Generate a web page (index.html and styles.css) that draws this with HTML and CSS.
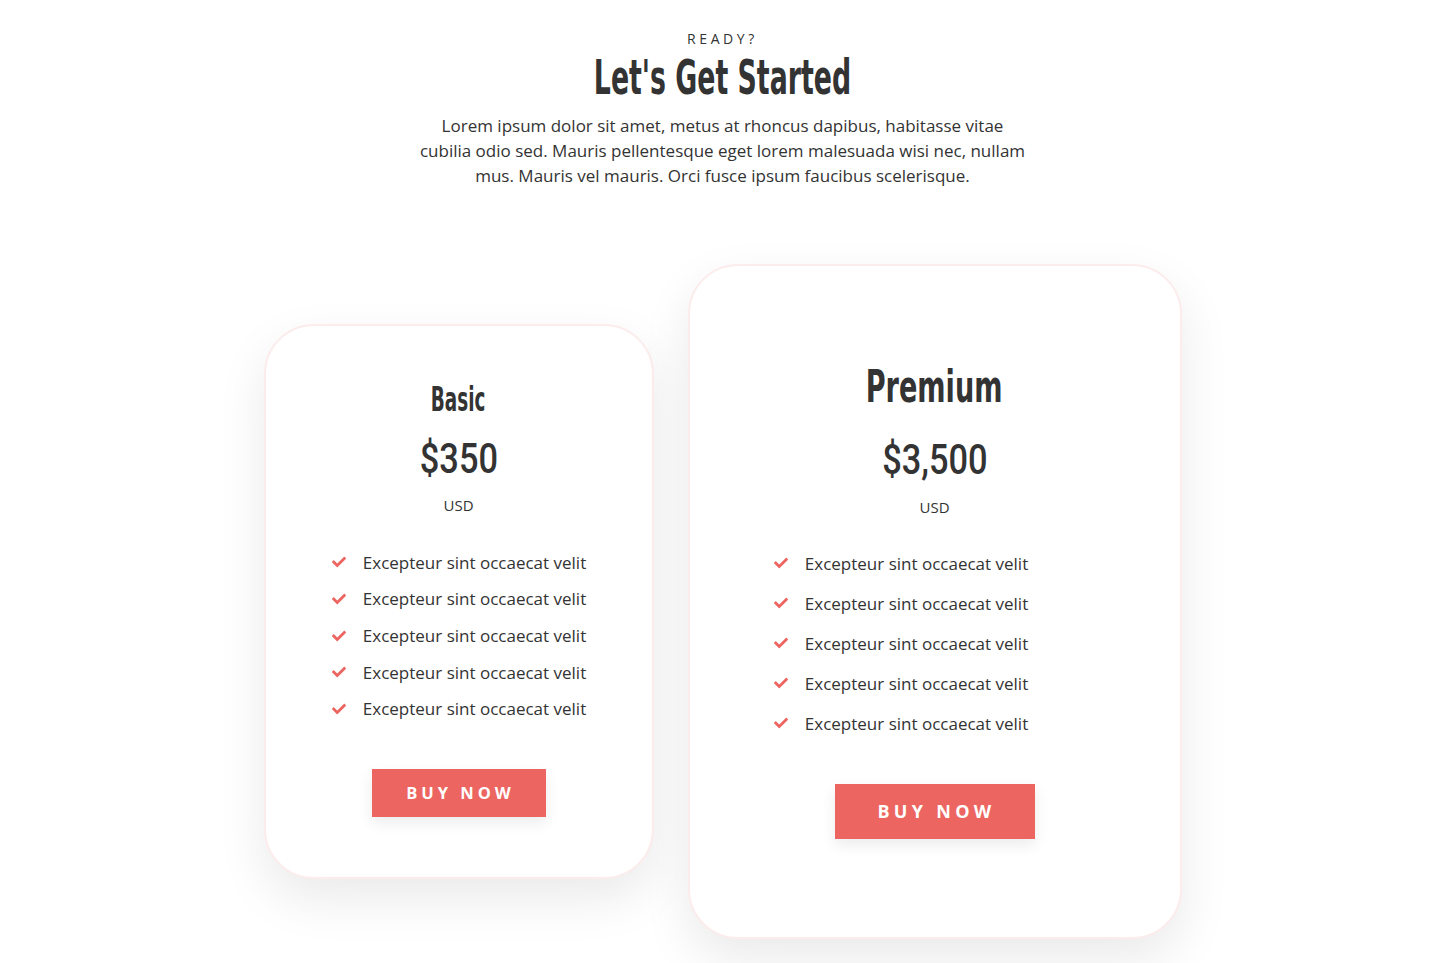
FILE: index.html
```html
<!DOCTYPE html>
<html lang="en">
<head>
<meta charset="utf-8">
<title>Pricing</title>
<link rel="stylesheet" href="styles.css">
</head>
<body>
<section class="pricing">
  <header class="intro">
    <p class="eyebrow">READY?</p>
    <h1 class="title"><span class="condensed">Let's Get Started</span></h1>
    <p class="lead">Lorem ipsum dolor sit amet, metus at rhoncus dapibus, habitasse vitae<br>cubilia odio sed. Mauris pellentesque eget lorem malesuada wisi nec, nullam<br>mus. Mauris vel mauris. Orci fusce ipsum faucibus scelerisque.</p>
  </header>

  <div class="plans">
    <article class="card card-basic">
      <h2 class="plan-name"><span class="condensed">Basic</span></h2>
      <div class="price"><span class="condensed-num">$350</span></div>
      <div class="currency">USD</div>
      <ul class="features">
        <li><svg class="check" viewBox="0 0 512 512"><path d="M173.9 439.4l-166.4-166.4c-10-10-10-26.2 0-36.2l36.2-36.2c10-10 26.2-10 36.2 0L192 312.7 432.1 72.6c10-10 26.2-10 36.2 0l36.2 36.2c10 10 10 26.2 0 36.2l-294.4 294.4c-10 10-26.2 10-36.2 0z"/></svg>Excepteur sint occaecat velit</li>
        <li><svg class="check" viewBox="0 0 512 512"><path d="M173.9 439.4l-166.4-166.4c-10-10-10-26.2 0-36.2l36.2-36.2c10-10 26.2-10 36.2 0L192 312.7 432.1 72.6c10-10 26.2-10 36.2 0l36.2 36.2c10 10 10 26.2 0 36.2l-294.4 294.4c-10 10-26.2 10-36.2 0z"/></svg>Excepteur sint occaecat velit</li>
        <li><svg class="check" viewBox="0 0 512 512"><path d="M173.9 439.4l-166.4-166.4c-10-10-10-26.2 0-36.2l36.2-36.2c10-10 26.2-10 36.2 0L192 312.7 432.1 72.6c10-10 26.2-10 36.2 0l36.2 36.2c10 10 10 26.2 0 36.2l-294.4 294.4c-10 10-26.2 10-36.2 0z"/></svg>Excepteur sint occaecat velit</li>
        <li><svg class="check" viewBox="0 0 512 512"><path d="M173.9 439.4l-166.4-166.4c-10-10-10-26.2 0-36.2l36.2-36.2c10-10 26.2-10 36.2 0L192 312.7 432.1 72.6c10-10 26.2-10 36.2 0l36.2 36.2c10 10 10 26.2 0 36.2l-294.4 294.4c-10 10-26.2 10-36.2 0z"/></svg>Excepteur sint occaecat velit</li>
        <li><svg class="check" viewBox="0 0 512 512"><path d="M173.9 439.4l-166.4-166.4c-10-10-10-26.2 0-36.2l36.2-36.2c10-10 26.2-10 36.2 0L192 312.7 432.1 72.6c10-10 26.2-10 36.2 0l36.2 36.2c10 10 10 26.2 0 36.2l-294.4 294.4c-10 10-26.2 10-36.2 0z"/></svg>Excepteur sint occaecat velit</li>
      </ul>
      <a class="btn" href="#">BUY NOW</a>
    </article>

    <article class="card card-premium">
      <h2 class="plan-name"><span class="condensed">Premium</span></h2>
      <div class="price"><span class="condensed-num">$3,500</span></div>
      <div class="currency">USD</div>
      <ul class="features">
        <li><svg class="check" viewBox="0 0 512 512"><path d="M173.9 439.4l-166.4-166.4c-10-10-10-26.2 0-36.2l36.2-36.2c10-10 26.2-10 36.2 0L192 312.7 432.1 72.6c10-10 26.2-10 36.2 0l36.2 36.2c10 10 10 26.2 0 36.2l-294.4 294.4c-10 10-26.2 10-36.2 0z"/></svg>Excepteur sint occaecat velit</li>
        <li><svg class="check" viewBox="0 0 512 512"><path d="M173.9 439.4l-166.4-166.4c-10-10-10-26.2 0-36.2l36.2-36.2c10-10 26.2-10 36.2 0L192 312.7 432.1 72.6c10-10 26.2-10 36.2 0l36.2 36.2c10 10 10 26.2 0 36.2l-294.4 294.4c-10 10-26.2 10-36.2 0z"/></svg>Excepteur sint occaecat velit</li>
        <li><svg class="check" viewBox="0 0 512 512"><path d="M173.9 439.4l-166.4-166.4c-10-10-10-26.2 0-36.2l36.2-36.2c10-10 26.2-10 36.2 0L192 312.7 432.1 72.6c10-10 26.2-10 36.2 0l36.2 36.2c10 10 10 26.2 0 36.2l-294.4 294.4c-10 10-26.2 10-36.2 0z"/></svg>Excepteur sint occaecat velit</li>
        <li><svg class="check" viewBox="0 0 512 512"><path d="M173.9 439.4l-166.4-166.4c-10-10-10-26.2 0-36.2l36.2-36.2c10-10 26.2-10 36.2 0L192 312.7 432.1 72.6c10-10 26.2-10 36.2 0l36.2 36.2c10 10 10 26.2 0 36.2l-294.4 294.4c-10 10-26.2 10-36.2 0z"/></svg>Excepteur sint occaecat velit</li>
        <li><svg class="check" viewBox="0 0 512 512"><path d="M173.9 439.4l-166.4-166.4c-10-10-10-26.2 0-36.2l36.2-36.2c10-10 26.2-10 36.2 0L192 312.7 432.1 72.6c10-10 26.2-10 36.2 0l36.2 36.2c10 10 10 26.2 0 36.2l-294.4 294.4c-10 10-26.2 10-36.2 0z"/></svg>Excepteur sint occaecat velit</li>
      </ul>
      <a class="btn" href="#">BUY NOW</a>
    </article>
  </div>
</section>
</body>
</html>
```

FILE: styles.css
```css
* { box-sizing: border-box; }

html, body {
  margin: 0;
  padding: 0;
  background: #ffffff;
}

body {
  font-family: "Open Sans", "Noto Sans", sans-serif;
  color: #333333;
}

.pricing {
  display: flex;
  flex-direction: column;
  align-items: center;
  padding: 30px 0 60px;
}

.intro {
  display: flex;
  flex-direction: column;
  align-items: center;
  text-align: center;
}

.eyebrow {
  margin: 0;
  font-family: "Open Sans", sans-serif;
  font-size: 14px;
  font-weight: 500;
  letter-spacing: 3.6px;
  line-height: 18px;
  color: #333;
}

.title {
  margin: 0;
  font-family: "DejaVu Sans Condensed", "DejaVu Sans", sans-serif;
  font-weight: 700;
  font-size: 48px;
  line-height: 58px;
  color: #333;
}

.condensed {
  display: inline-block;
  transform: scaleX(0.62);
  transform-origin: center;
  white-space: nowrap;
}

.lead {
  margin: 7px 0 0;
  font-family: "Open Sans", sans-serif;
  font-size: 17px;
  line-height: 25px;
  color: #333;
}

.plans {
  display: flex;
  align-items: center;
  gap: 34px;
  margin-top: 76px;
}

.card {
  display: flex;
  flex-direction: column;
  align-items: center;
  background: #fff;
  border: 2px solid #fcecec;
  border-radius: 50px;
  box-shadow: 0 20px 50px rgba(0, 0, 0, 0.085);
}

.card-basic {
  width: 390px;
  padding: 52px 0 60px;
}

.card-premium {
  width: 494px;
  padding: 95px 0 98px;
}

.plan-name {
  margin: 0;
  font-family: "DejaVu Sans Condensed", "DejaVu Sans", sans-serif;
  font-weight: 700;
  color: #333;
}

.card-basic .plan-name { font-size: 33px; line-height: 44px; }
.card-premium .plan-name { font-size: 45px; line-height: 52px; }
.card-premium .plan-name .condensed { transform: scaleX(0.67); }

.price {
  font-family: Roboto, "DejaVu Sans", sans-serif;
  font-weight: 500;
  font-size: 43px;
  line-height: 56px;
  color: #333;
  margin-top: 8px;
}

.card-premium .price { margin-top: 18px; }

.condensed-num {
  display: inline-block;
  transform: scaleX(0.8);
  transform-origin: center;
  white-space: nowrap;
}

.currency {
  font-family: "Open Sans", sans-serif;
  font-size: 15px;
  line-height: 20px;
  margin-top: 9px;
  color: #333;
}

.card-premium .currency { margin-top: 10px; }

.features {
  list-style: none;
  margin: 29px 0 0;
  padding: 0;
  display: flex;
  flex-direction: column;
}

.card-premium .features {
  margin-top: 26px;
  margin-right: 68px;
}

.features li {
  display: flex;
  align-items: center;
  font-family: "Open Sans", sans-serif;
  font-size: 17px;
  color: #333;
  height: 36.7px;
}

.card-premium .features li { height: 40px; }

.check {
  width: 16px;
  height: 14px;
  fill: #ec6561;
  margin-right: 16px;
  flex: none;
}

.btn {
  display: inline-block;
  background: #ec6561;
  color: #fff;
  text-decoration: none;
  font-family: "Open Sans", sans-serif;
  font-weight: 700;
  letter-spacing: 4px;
  text-align: center;
  padding-left: 4px;
  box-shadow: 0 6px 14px rgba(0, 0, 0, 0.08);
}

.card-basic .btn {
  margin-top: 42px;
  width: 174px;
  height: 48px;
  line-height: 48px;
  font-size: 16.5px;
}

.card-premium .btn {
  margin-top: 41px;
  width: 200px;
  height: 55px;
  line-height: 55px;
  font-size: 18px;
  letter-spacing: 4.3px;
}
```
